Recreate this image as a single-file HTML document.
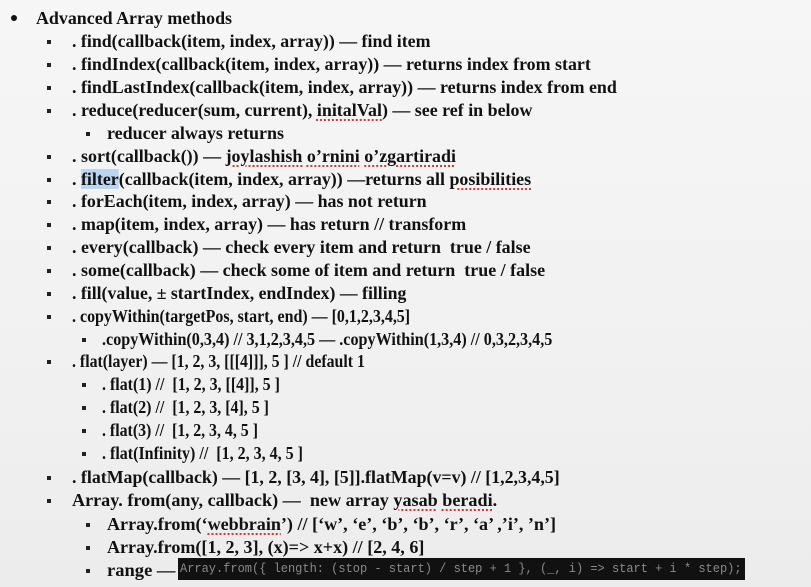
<!DOCTYPE html>
<html><head><meta charset="utf-8">
<style>
html,body{margin:0;padding:0}
body{width:811px;height:587px;overflow:hidden;position:relative;background:linear-gradient(#f6f6f6,#f1f1f1 60%,#ececec);font-family:"Liberation Serif",serif;font-weight:bold;color:#111}
.l{position:absolute;white-space:nowrap;font-size:18px;line-height:20px;transform-origin:0 50%}
.b{position:absolute;width:4px;height:4px;background:#222}
.big{position:absolute;width:6px;height:6px;border-radius:50%;background:#111}
.r{text-decoration:underline dotted #d33;text-decoration-thickness:2px;text-underline-offset:3px}
.hl{background:#bcd6f2}
.code{position:absolute;left:178px;top:558px;width:567px;height:22px;background:#111}
.ct{position:absolute;left:180px;top:561px;font-family:"Liberation Mono",monospace;font-weight:normal;font-size:13px;color:#8a8a8a;white-space:nowrap;transform-origin:0 50%}
</style></head><body>
<div class="big" style="left:11px;top:15px"></div>
<div class="code"></div>
<div class="ct" id="ct">Array.from({ length: (stop - start) / step + 1 }, (_, i) =&gt; start + i * step);</div>
<div id="c"></div>
<script>
var L=[
[36,18,232,'Advanced Array methods',0],
[72,41,430,'. find(callback(item, index, array)) — find item',1],
[72,64,591,'. findIndex(callback(item, index, array)) — returns index from start',1],
[72,87,617,'. findLastIndex(callback(item, index, array)) — returns index from end',1],
[72,110,532,'. reduce(reducer(sum, current), <span class="r">initalVal</span>) — see ref in below',1],
[107,133,284,'reducer always returns',2],
[72,156,456,'. sort(callback()) — <span class="r">joylashish</span> <span class="r">o’rnini</span> <span class="r">o’zgartiradi</span>',1],
[72,179,531,'. <span class="hl">filter</span>(callback(item, index, array)) —returns all <span class="r">posibilities</span>',1],
[72,201,427,'. forEach(item, index, array) — has not return',1],
[72,224,466,'. map(item, index, array) — has return // transform',1],
[72,247,531,'. every(callback) — check every item and return&nbsp; true / false',1],
[72,270,545,'. some(callback) — check some of item and return&nbsp; true / false',1],
[72,293,406,'. fill(value, ± startIndex, endIndex) — filling',1],
[72,316,410,'. copyWithin(targetPos, start, end) — [0,1,2,3,4,5]',1],
[102,339,552,'.copyWithin(0,3,4) // 3,1,2,3,4,5 — .copyWithin(1,3,4) // 0,3,2,3,4,5',3],
[72,361,365,'. flat(layer) — [1, 2, 3, [[[4]]], 5 ] // default 1',1],
[102,384,280,'. flat(1) //&nbsp; [1, 2, 3, [[4]], 5 ]',3],
[102,407,269,'. flat(2) //&nbsp; [1, 2, 3, [4], 5 ]',3],
[102,430,258,'. flat(3) //&nbsp; [1, 2, 3, 4, 5 ]',3],
[102,453,303,'. flat(Infinity) //&nbsp; [1, 2, 3, 4, 5 ]',3],
[72,477,560,'. flatMap(callback) — [1, 2, [3, 4], [5]].flatMap(v=v) // [1,2,3,4,5]',1],
[72,500,497,'Array. from(any, callback) —&nbsp; new array <span class="r">yasab</span> <span class="r">beradi</span>.',1],
[107,524,556,'Array.from(‘<span class="r">webbrain</span>’) // [‘w’, ‘e’, ‘b’, ‘b’, ‘r’, ‘a’ ,’i’, ’n’]',2],
[107,547,424,'Array.from([1, 2, 3], (x)=&gt; x+x) // [2, 4, 6]',2],
[107,570,176,'range —',2]
];
var c=document.getElementById('c'),h='';
L.forEach(function(a,i){
 h+='<div class="l" id="l'+i+'" style="left:'+a[0]+'px;top:'+(a[1]-10)+'px">'+a[3]+'</div>';
 var bx=a[4]==1?47:(a[4]==2?86:(a[4]==3?82:0));
 if(bx)h+='<div class="b" style="left:'+bx+'px;top:'+(a[1]-1)+'px"></div>';
});
c.innerHTML=h;
L.forEach(function(a,i){var e=document.getElementById('l'+i);var w=e.offsetWidth;if(w)e.style.transform='scaleX('+((a[2]-a[0])/w)+')';});
var ct=document.getElementById('ct');ct.style.transform='scaleX('+(562/ct.offsetWidth)+')';
</script>
</body></html>
